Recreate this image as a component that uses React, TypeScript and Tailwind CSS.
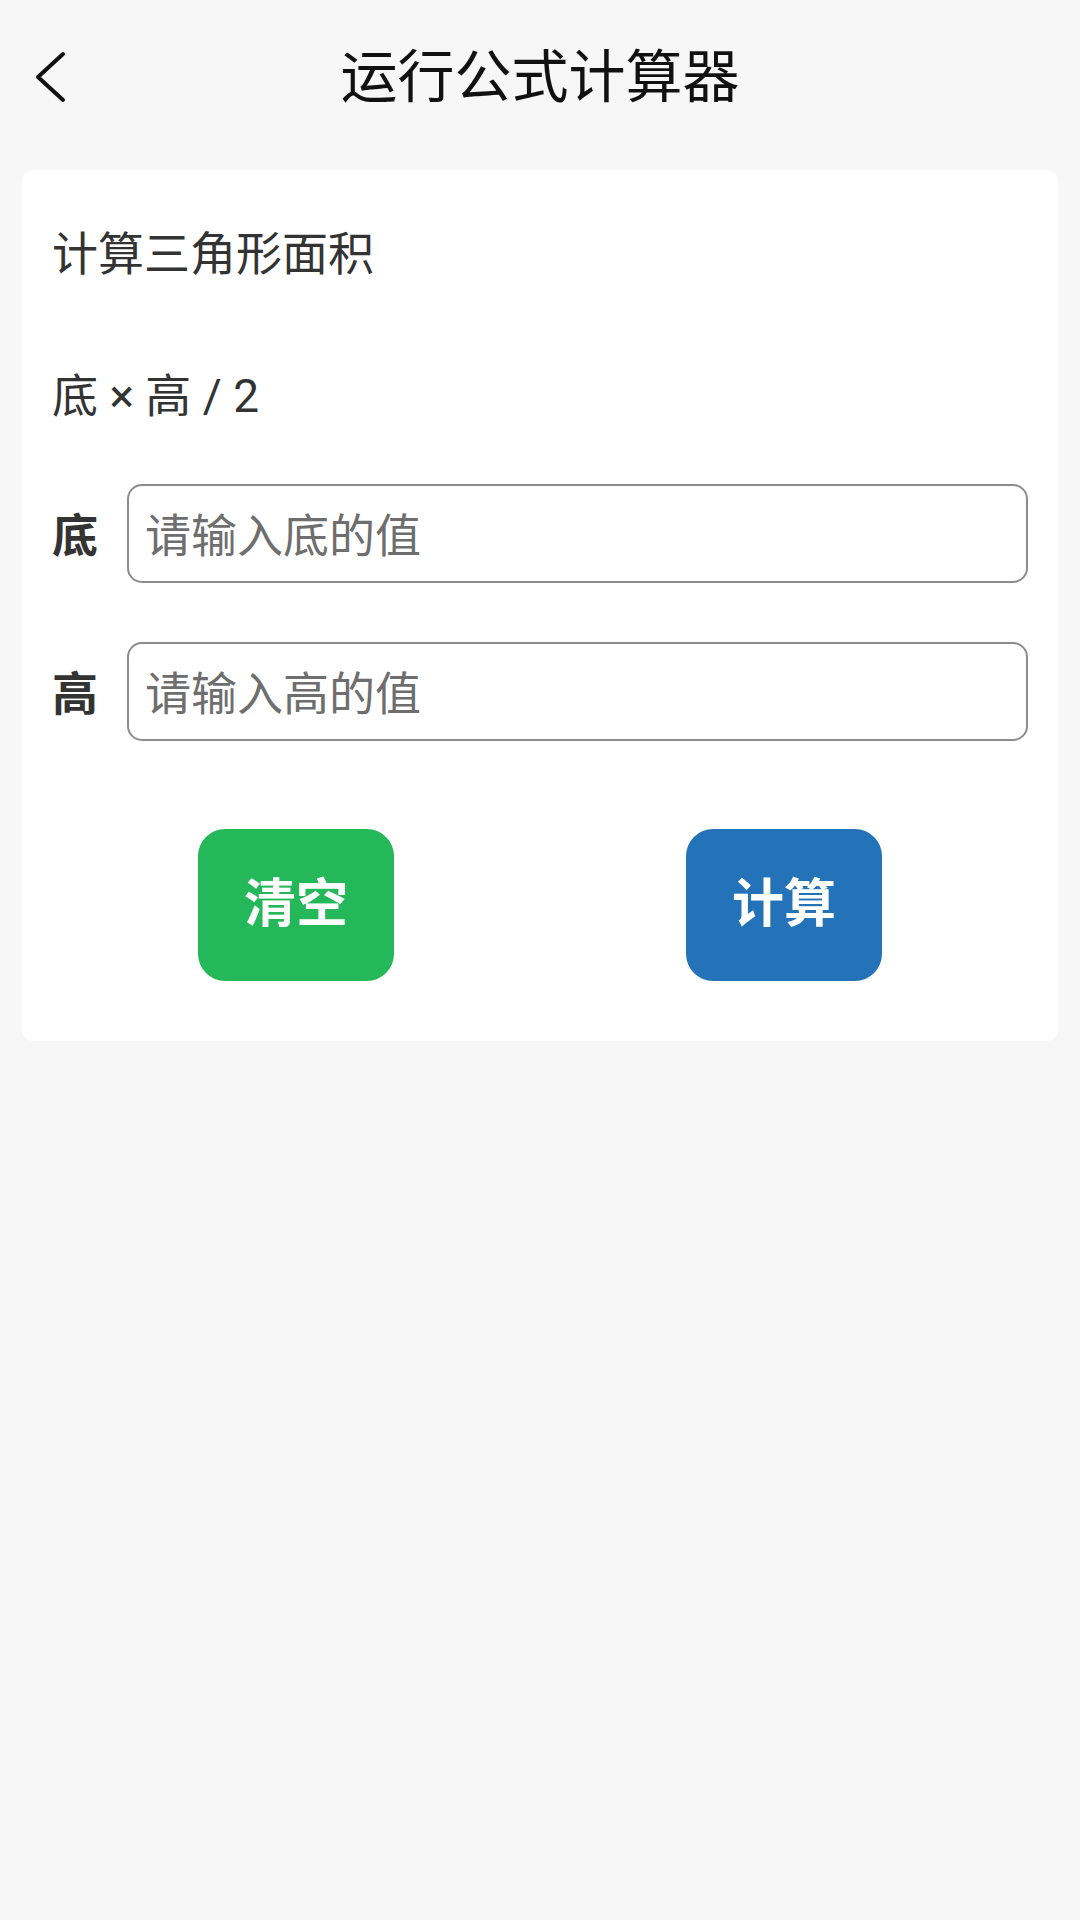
import React from "react";

const font = { fontFamily: '"Noto Sans CJK SC", "Noto Sans", sans-serif' };
const formulaFont = { fontFamily: 'Roboto, "Noto Sans CJK SC", sans-serif' };

function Field({ label, placeholder }: { label: string; placeholder: string }) {
  return (
    <div className="flex items-center">
      <span className="mb-[4px] w-[46px] text-[46px] leading-[60px] font-bold text-[#333333]">{label}</span>
      <input
        className="ml-[29px] h-[99px] flex-1 rounded-[15px] border-2 border-[#8c8c8c] bg-white pb-[4px] pl-[16px] text-[46px] text-[#333333] outline-none placeholder:text-[#6e6e6e]"
        placeholder={placeholder}
        style={font}
      />
    </div>
  );
}

export default function App() {
  return (
    <div className="min-h-screen w-[1080px] bg-[#f7f7f7]" style={font}>
      <div className="grid h-[154px] grid-cols-[1fr_auto_1fr] items-center">
        <div className="flex items-center pl-[35px]">
          <svg width="32" height="52" viewBox="0 0 32 52" fill="none">
            <polyline
              points="28,3 3,26 28,49"
              stroke="#111111"
              strokeWidth="4"
              strokeLinecap="round"
              strokeLinejoin="round"
            />
          </svg>
        </div>
        <h1 className="mb-[10px] text-[57px] leading-[70px] font-normal text-[#111111]">运行公式计算器</h1>
        <div />
      </div>

      <div className="mx-[22px] mt-[16px] rounded-[12px] bg-white px-[30px] pt-[50px] pb-[60px]">
        <div className="text-[46px] leading-[60px] text-[#333333]">计算三角形面积</div>
        <div className="mt-[86px] text-[46px] leading-[60px] text-[#333333]" style={formulaFont}>
          底 × 高 / 2
        </div>
        <div className="mt-[58px] flex flex-col gap-[59px]">
          <Field label="底" placeholder="请输入底的值" />
          <Field label="高" placeholder="请输入高的值" />
        </div>
        <div className="mt-[88px] flex justify-around">
          <button className="flex h-[152px] w-[196px] items-center justify-center rounded-[27px] bg-[#25b85b] pb-[10px] text-[52px] font-bold text-white">
            清空
          </button>
          <button className="flex h-[152px] w-[196px] items-center justify-center rounded-[27px] bg-[#2473b9] pb-[10px] text-[52px] font-bold text-white">
            计算
          </button>
        </div>
      </div>
    </div>
  );
}
